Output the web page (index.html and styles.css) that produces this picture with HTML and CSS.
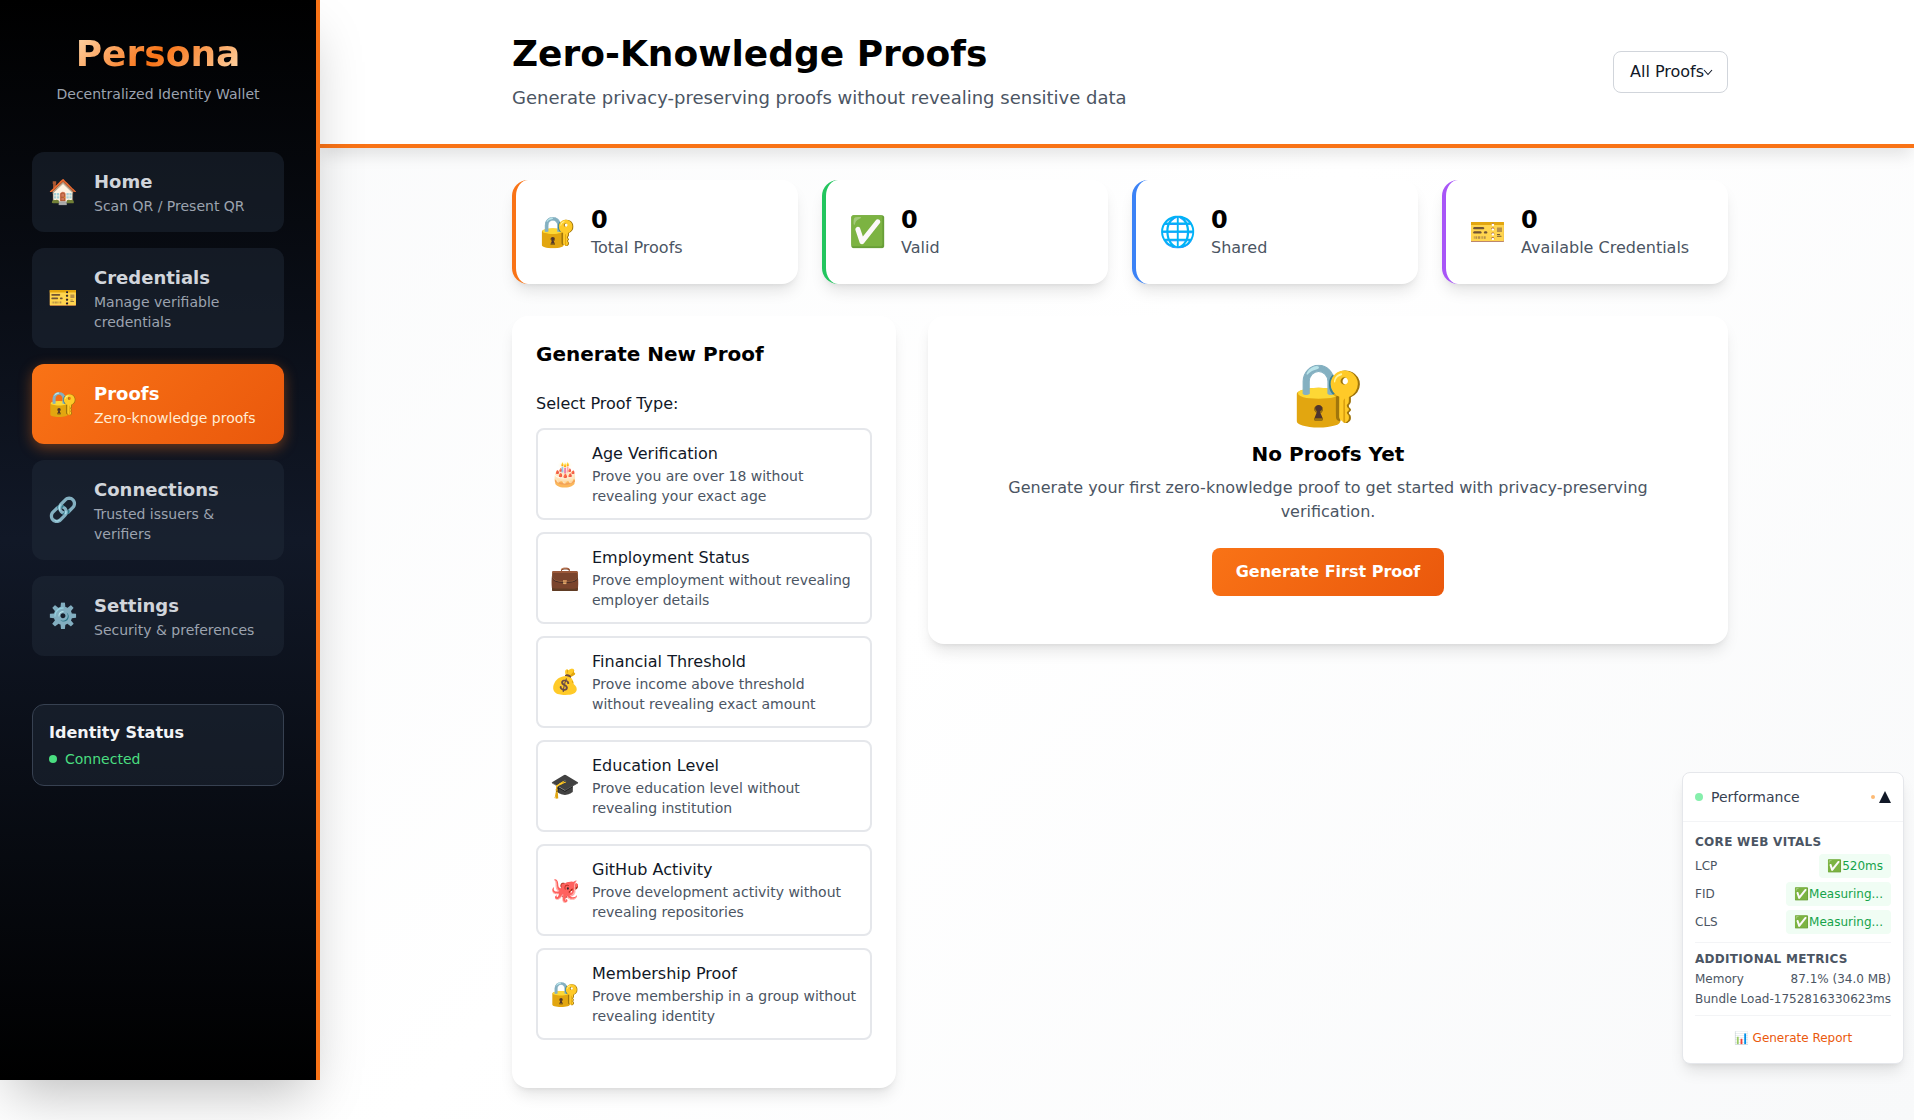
FILE: index.html
```html
<!DOCTYPE html>
<html lang="en">
<head>
<meta charset="utf-8">
<title>Persona - Zero-Knowledge Proofs</title>
<link rel="stylesheet" href="styles.css">
</head>
<body>
<div class="app">
  <aside class="sidebar">
    <div class="brand">
      <h1 class="brand-name">Persona</h1>
      <p class="brand-sub">Decentralized Identity Wallet</p>
    </div>
    <nav class="nav">
      <a class="nav-item"><span class="nav-icon">🏠</span><span class="nav-text"><span class="nav-title">Home</span><span class="nav-sub">Scan QR / Present QR</span></span></a>
      <a class="nav-item"><span class="nav-icon">🎫</span><span class="nav-text"><span class="nav-title">Credentials</span><span class="nav-sub">Manage verifiable credentials</span></span></a>
      <a class="nav-item active"><span class="nav-icon">🔐</span><span class="nav-text"><span class="nav-title">Proofs</span><span class="nav-sub">Zero-knowledge proofs</span></span></a>
      <a class="nav-item"><span class="nav-icon">🔗</span><span class="nav-text"><span class="nav-title">Connections</span><span class="nav-sub">Trusted issuers &amp; verifiers</span></span></a>
      <a class="nav-item"><span class="nav-icon">⚙️</span><span class="nav-text"><span class="nav-title">Settings</span><span class="nav-sub">Security &amp; preferences</span></span></a>
    </nav>
    <div class="identity">
      <div class="identity-title">Identity Status</div>
      <div class="identity-state"><span class="identity-dot"></span>Connected</div>
    </div>
  </aside>
  <main class="main">
    <header class="topbar">
      <div class="topbar-inner">
        <div class="topbar-text">
          <h2 class="page-title">Zero-Knowledge Proofs</h2>
          <p class="page-sub">Generate privacy-preserving proofs without revealing sensitive data</p>
        </div>
        <div class="select">All Proofs<svg class="chev" viewBox="0 0 12 12" width="12" height="12"><path d="M2 4l4 4.5L10 4" fill="none" stroke="#111827" stroke-width="1.1"/></svg></div>
      </div>
    </header>
    <div class="content">
      <section class="stats">
        <div class="stat stat-orange"><span class="stat-icon">🔐</span><div><div class="stat-num">0</div><div class="stat-label">Total Proofs</div></div></div>
        <div class="stat stat-green"><span class="stat-icon">✅</span><div><div class="stat-num">0</div><div class="stat-label">Valid</div></div></div>
        <div class="stat stat-blue"><span class="stat-icon">🌐</span><div><div class="stat-num">0</div><div class="stat-label">Shared</div></div></div>
        <div class="stat stat-purple"><span class="stat-icon">🎫</span><div><div class="stat-num">0</div><div class="stat-label">Available Credentials</div></div></div>
      </section>
      <section class="columns">
        <div class="panel gen">
          <h3 class="gen-title">Generate New Proof</h3>
          <div class="gen-label">Select Proof Type:</div>
          <div class="types">
            <div class="type"><span class="type-icon">🎂</span><div><div class="type-title">Age Verification</div><div class="type-desc">Prove you are over 18 without revealing your exact age</div></div></div>
            <div class="type"><span class="type-icon">💼</span><div><div class="type-title">Employment Status</div><div class="type-desc">Prove employment without revealing employer details</div></div></div>
            <div class="type"><span class="type-icon">💰</span><div><div class="type-title">Financial Threshold</div><div class="type-desc">Prove income above threshold without revealing exact amount</div></div></div>
            <div class="type"><span class="type-icon">🎓</span><div><div class="type-title">Education Level</div><div class="type-desc">Prove education level without revealing institution</div></div></div>
            <div class="type"><span class="type-icon">🐙</span><div><div class="type-title">GitHub Activity</div><div class="type-desc">Prove development activity without revealing repositories</div></div></div>
            <div class="type"><span class="type-icon">🔐</span><div><div class="type-title">Membership Proof</div><div class="type-desc">Prove membership in a group without revealing identity</div></div></div>
          </div>
        </div>
        <div class="panel empty">
          <div class="empty-icon">🔐</div>
          <h3 class="empty-title">No Proofs Yet</h3>
          <p class="empty-text">Generate your first zero-knowledge proof to get started with privacy-preserving verification.</p>
          <button class="cta">Generate First Proof</button>
        </div>
      </section>
    </div>
  </main>
</div>
<aside class="perf">
  <div class="perf-head">
    <span class="perf-dot"></span><span class="perf-name">Performance</span>
    <span class="perf-mini"></span><span class="perf-tri"></span>
  </div>
  <div class="perf-body">
    <div class="perf-h">CORE WEB VITALS</div>
    <div class="vital"><span>LCP</span><span class="pill">✅520ms</span></div>
    <div class="vital"><span>FID</span><span class="pill">✅Measuring...</span></div>
    <div class="vital"><span>CLS</span><span class="pill">✅Measuring...</span></div>
    <div class="perf-sect">
      <div class="perf-h">ADDITIONAL METRICS</div>
      <div class="metric"><span>Memory</span><span>87.1% (34.0 MB)</span></div>
      <div class="metric"><span>Bundle Load</span><span>-1752816330623ms</span></div>
    </div>
    <div class="perf-foot">📊 Generate Report</div>
  </div>
</aside>
</body>
</html>
```
FILE: styles.css
```css
* { box-sizing: border-box; }
html, body { margin: 0; padding: 0; }
body {
  font-family: "DejaVu Sans", sans-serif;
  color: #000;
  background: #fff;
  height: 1120px;
  overflow: hidden;
  position: relative;
}
h1, h2, h3, p { margin: 0; }

.app { display: flex; align-items: flex-start; height: 1120px; background: linear-gradient(135deg, #f8f9fa 0%, #ffffff 50%, #f8f9fa 100%); }

.sidebar {
  position: relative;
  z-index: 2;
  width: 320px;
  height: 1080px;
  flex: none;
  background: linear-gradient(180deg, #000 0%, #111827 50%, #000 100%);
  border-right: 4px solid #f97316;
  padding: 34px 32px 32px;
  box-shadow: 0 25px 50px -12px rgba(0,0,0,.25);
}
.brand { text-align: center; margin-bottom: 48px; }
.brand-name {
  width: fit-content;
  font-size: 36px;
  line-height: 40px;
  font-weight: 700;
  background: linear-gradient(135deg, #fed7aa, #f97316 50%, #fed7aa);
  -webkit-background-clip: text;
  background-clip: text;
  color: transparent;
  margin: 0 auto 10px;
}
.brand-sub { font-size: 14px; line-height: 20px; color: #9ca3af; }

.nav { display: flex; flex-direction: column; gap: 16px; }
.nav-item {
  display: flex;
  align-items: center;
  gap: 16px;
  padding: 16px;
  border-radius: 12px;
  background: rgba(31,41,55,.5);
}
.nav-icon { font-size: 24px; line-height: 32px; width: 30px; flex: none; text-align: center; white-space: nowrap; }
.nav-text { display: flex; flex-direction: column; min-width: 0; }
.nav-title { font-size: 18px; line-height: 28px; font-weight: 700; color: #d1d5db; }
.nav-sub { font-size: 14px; line-height: 20px; color: #9ca3af; }
.nav-item.active {
  background: linear-gradient(135deg, #f97316, #ea580c);
  box-shadow: 0 4px 14px rgba(249,115,22,.4);
}
.active .nav-title { color: #fff; }
.active .nav-sub { color: #ffedd5; }

.identity {
  margin-top: 48px;
  padding: 16px;
  border: 1px solid #374151;
  border-radius: 12px;
  background: rgba(31,41,55,.5);
}
.identity-title { font-size: 16px; line-height: 24px; font-weight: 700; color: #f3f4f6; margin-bottom: 4px; }
.identity-state { display: flex; align-items: center; gap: 8px; font-size: 14px; line-height: 20px; color: #4ade80; }
.identity-dot { width: 8px; height: 8px; border-radius: 50%; background: #4ade80; }

.main { flex: 1; min-width: 0; }
.topbar {
  height: 148px;
  background: #fff;
  border-bottom: 4px solid #f97316;
  box-shadow: 0 10px 15px -3px rgba(0,0,0,.1);
  position: relative;
}
.topbar-inner {
  width: 1216px;
  height: 100%;
  margin-left: 192px;
  display: flex;
  align-items: center;
  justify-content: space-between;
}
.topbar-text { padding-top: 2px; }
.page-title { font-size: 36px; line-height: 40px; font-weight: 700; margin-bottom: 10px; }
.page-sub { font-size: 18px; line-height: 28px; color: #4b5563; }
.select {
  display: flex;
  align-items: center;
  height: 42px;
  width: 115px;
  padding: 0 6px 0 16px;
  background: #fff;
  border: 1px solid #d1d5db;
  border-radius: 8px;
  font-size: 16px;
  color: #111827;
  margin-top: -1px;
}
.chev { flex: none; margin-left: -2px; }

.content { width: 1216px; margin: 32px 0 0 192px; }
.stats { display: grid; grid-template-columns: repeat(4, 1fr); gap: 24px; margin-bottom: 32px; }
.stat {
  display: flex;
  align-items: center;
  gap: 15px;
  height: 104px;
  padding: 24px 24px 24px 23px;
  background: #fff;
  border-left: 4px solid;
  border-radius: 16px;
  box-shadow: 0 10px 15px -3px rgba(0,0,0,.1), 0 4px 6px -4px rgba(0,0,0,.1);
}
.stat-orange { border-left-color: #f97316; }
.stat-green { border-left-color: #22c55e; }
.stat-blue { border-left-color: #3b82f6; }
.stat-purple { border-left-color: #a855f7; }
.stat-icon { font-size: 30px; line-height: 36px; flex: none; }
.stat-num { font-size: 24px; line-height: 32px; font-weight: 700; }
.stat-label { font-size: 16px; line-height: 24px; color: #4b5563; }

.columns { display: grid; grid-template-columns: 384px 800px; gap: 32px; align-items: start; }
.panel {
  background: #fff;
  border-radius: 16px;
  box-shadow: 0 10px 15px -3px rgba(0,0,0,.1), 0 4px 6px -4px rgba(0,0,0,.1);
}
.gen { padding: 24px; height: 772px; }
.gen-title { font-size: 20px; line-height: 28px; font-weight: 700; margin-bottom: 24px; }
.gen-label { font-size: 16px; line-height: 24px; color: #111827; margin-bottom: 12px; }
.types { display: flex; flex-direction: column; gap: 12px; }
.type {
  display: flex;
  align-items: center;
  gap: 14px;
  padding: 12px;
  border: 2px solid #e5e7eb;
  border-radius: 8px;
  background: #fff;
}
.type-icon { font-size: 24px; line-height: 32px; width: 28px; flex: none; text-align: center; white-space: nowrap; }
.type-title { font-size: 16px; line-height: 24px; color: #111827; }
.type-desc { font-size: 14px; line-height: 20px; color: #4b5563; }

.empty { padding: 48px; text-align: center; }
.empty-icon { font-size: 60px; line-height: 60px; margin-bottom: 16px; }
.empty-title { font-size: 20px; line-height: 28px; font-weight: 700; margin-bottom: 8px; }
.empty-text { font-size: 16px; line-height: 24px; color: #4b5563; margin-bottom: 24px; }
.cta {
  font: 700 16px/24px "DejaVu Sans", sans-serif;
  color: #fff;
  border: 0;
  padding: 12px 24px;
  border-radius: 8px;
  background: linear-gradient(135deg, #f97316, #ea580c);
}

.perf {
  position: absolute;
  left: 1682px;
  top: 772px;
  width: 222px;
  background: #fff;
  border: 1px solid #e5e7eb;
  border-radius: 8px;
  box-shadow: 0 10px 15px -3px rgba(0,0,0,.1), 0 4px 6px -4px rgba(0,0,0,.1);
  font-size: 12px;
  color: #4b5563;
}
.perf-head {
  display: flex;
  align-items: center;
  height: 49px;
  padding: 0 12px;
  border-bottom: 1px solid #f3f4f6;
}
.perf-dot { width: 8px; height: 8px; border-radius: 50%; background: #86efac; margin-right: 8px; }
.perf-name { font-size: 14px; color: #374151; flex: 1; }
.perf-mini { width: 4px; height: 4px; border-radius: 50%; background: #fdba74; margin-right: 4px; }
.perf-tri { width: 0; height: 0; border-left: 6px solid transparent; border-right: 6px solid transparent; border-bottom: 12px solid #111827; }
.perf-body { padding: 12px 12px 17px; }
.perf-h { font-size: 12px; line-height: 16px; font-weight: 700; color: #4b5563; letter-spacing: .3px; }
.vital { display: flex; justify-content: space-between; align-items: center; height: 24px; margin-top: 4px; }
.pill { background: #f0fdf4; color: #16a34a; padding: 0 8px; line-height: 24px; border-radius: 4px; }
.perf-sect { margin-top: 8px; padding-top: 8px; border-top: 1px solid #f3f4f6; padding-bottom: 8px; border-bottom: 1px solid #f3f4f6; }
.metric { display: flex; justify-content: space-between; line-height: 16px; margin-top: 4px; white-space: nowrap; }
.perf-foot { text-align: center; color: #ea580c; line-height: 16px; margin-top: 14px; }
```
